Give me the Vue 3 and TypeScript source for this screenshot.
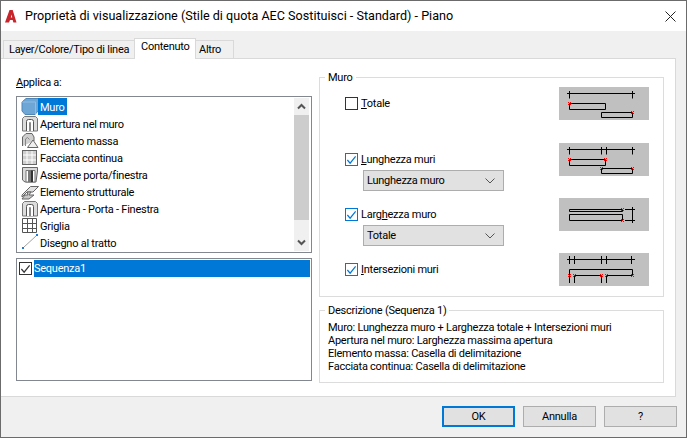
<script setup lang="ts">
interface Row { name: string; icon: string }
const rows: Row[] = [
  { name: 'Muro', icon: 'wall' },
  { name: 'Apertura nel muro', icon: 'opening' },
  { name: 'Elemento massa', icon: 'mass' },
  { name: 'Facciata continua', icon: 'curtain' },
  { name: 'Assieme porta/finestra', icon: 'assembly' },
  { name: 'Elemento strutturale', icon: 'beam' },
  { name: 'Apertura - Porta - Finestra', icon: 'opening' },
  { name: 'Griglia', icon: 'grid' },
  { name: 'Disegno al tratto', icon: 'line' }
]
const descrizione = [
  'Muro: Lunghezza muro + Larghezza totale + Intersezioni muri',
  'Apertura nel muro: Larghezza massima apertura',
  'Elemento massa: Casella di delimitazione',
  'Facciata continua: Casella di delimitazione'
]
function crosses(points: number[][]): string {
  return points
    .map(([x, y]) => {
      const l = x - 1.5
      const t = y - 1.5
      return `M${l} ${t}h1v1h-1ZM${l + 2} ${t}h1v1h-1ZM${l + 1} ${t + 1}h1v1h-1ZM${l} ${t + 2}h1v1h-1ZM${l + 2} ${t + 2}h1v1h-1Z`
    })
    .join('')
}
const topA = 'M8 6.5H76M10.5 4v7.500M73.5 4v7.500'
const topB = 'M8 6.5H76M10.5 4v7.500M42.5 4v7.500M47.5 4v7.500M73.5 4v7.500'
const boxes = 'M10.5 16.5H46.5V22.5H10.5ZM42.5 25.5H73.5V30.5H42.5Z'
const thirdLines = 'M10.5 11.5H63.5V13.5H10.5ZM10.5 16.5H63.5V22.5H10.5ZM73.5 9V25M66 11.5H76M66 22.5H76'
const fourthLines = 'M8 6.5H76M10.5 3v8M15.5 3v8M42.5 3v8M47.5 3v8M72.5 3v8M10.5 30V16.5H73.5V22.5H47.5M42.5 22.5H15.5M15.5 22.5V30M42.5 22.5V30M47.5 22.5V30'
const diagrams = {
  totale: { lines: topA + boxes, marks: crosses([[10.5, 16.5], [73.5, 25.5]]) },
  lunghezza: { lines: topB + boxes, marks: crosses([[10.5, 16.5], [46.5, 16.5], [42.5, 25.5], [73.5, 25.5]]) },
  larghezza: { lines: thirdLines, marks: crosses([[63.5, 11.5], [63.5, 22.5]]) },
  intersezioni: { lines: fourthLines, marks: crosses([[10.5, 22.5], [15.5, 22.5], [42.5, 22.5], [47.5, 22.5], [73.5, 22.5]]) }
}
</script>

<template>
  <div class="dialog">
    <header class="titlebar">
      <svg class="appicon" viewBox="0 0 12 14" width="12" height="14">
        <path d="M0 13.500 4.500 1h3.200l3.800 12.500H8.400L7.700 11H5L4 13.500ZM5.800 8.600h1.400L6.700 5.600Z" fill="#c8242b" />
      </svg>
      <span class="title">Proprietà di visualizzazione (Stile di quota AEC Sostituisci - Standard) - Piano</span>
      <svg class="close" viewBox="0 0 11 11" width="11" height="11">
        <path d="M.5.500l10 10M10.500.5l-10 10" stroke="#222" fill="none" />
      </svg>
    </header>

    <nav class="tabs">
      <div class="tab first">Layer/Colore/Tipo di linea</div>
      <div class="tab active">Contenuto</div>
      <div class="tab last">Altro</div>
    </nav>

    <main class="panel">
      <section class="left">
        <div class="applica"><u>A</u>pplica a:</div>
        <div class="listbox">
          <ul class="rows">
            <li v-for="(row, i) in rows" :key="row.name" class="row">
              <svg class="rowicon" viewBox="0 0 18 17" width="18" height="17">
                <g v-if="row.icon === 'wall'">
                  <path d="M1 4 5 .5h12.500v12l-3.500 4H4L1 13Z" fill="#6ea6d6" stroke="#4f86b8" />
                  <path d="M1 4h13.500v12.500" fill="none" stroke="#8fbde4" />
                </g>
                <g v-else-if="row.icon === 'opening'" fill="none" stroke="#555">
                  <path d="M3.500 1.500h11l2 2v12.500h-15V3.500Z" fill="#dcdcdc" stroke="#777" />
                  <path d="M5.500 16V6.500a2 2 0 0 1 2-2h3a2 2 0 0 1 2 2V16" fill="#fff" />
                  <path d="M8.500 16V7.500h1V16" stroke="#888" />
                </g>
                <g v-else-if="row.icon === 'mass'" fill="none" stroke="#555">
                  <path d="M1.500 14V5L5 1.500h6L13 5v4" fill="#cfcfcf" stroke="#666" />
                  <path d="M4.500 14V7l2-1.500 2 2" stroke="#888" />
                  <path d="M6.500 15.500 12 8l5 7.500Z" fill="#efefef" stroke="#666" />
                </g>
                <g v-else-if="row.icon === 'curtain'">
                  <rect x="1.500" y="1.500" width="14" height="14" fill="#cfcfcf" stroke="#666" />
                  <path d="M6 2v13M11 2v13M2 6h13M2 11h13" stroke="#fff" />
                </g>
                <g v-else-if="row.icon === 'assembly'">
                  <path d="M1.500 1.500h15V5l-1.500 11H4L1.500 14Z" fill="#d8d8d8" stroke="#666" />
                  <path d="M5 4.500h9V16H5Z" fill="#fff" stroke="#777" />
                  <rect x="7" y="4.500" width="5" height="11.500" fill="#777" />
                  <rect x="10" y="4.500" width="2" height="11.500" fill="#333" />
                </g>
                <g v-else-if="row.icon === 'beam'" fill="#e2e2e2" stroke="#666">
                  <path d="M1 12 9.500 3.500h8L12 9H6L1 14Z" />
                  <path d="M6 9h4l-2 3 5 0-5 4H1l3-4 3 0Z" fill="#c8c8c8" />
                </g>
                <g v-else-if="row.icon === 'grid'" fill="none" stroke="#555">
                  <path d="M1.500 1.500h14v14h-14ZM6.500 1.500v14M11.500 1.500v14M1.500 6.500h14M1.500 11.500h14" />
                </g>
                <g v-else>
                  <path d="M3 13 15 2" stroke="#888" stroke-width=".8" fill="none" />
                  <path d="M1 13h2v2H1ZM15 0h2v2h-2Z" fill="#1f78d1" />
                </g>
              </svg>
              <span class="rowtext" :class="{ selected: i === 0 }">{{ row.name }}</span>
            </li>
          </ul>
          <div class="scrollbar">
            <svg viewBox="0 0 15 17" width="15" height="17"><path d="M4 10.500 7.500 7 11 10.500" fill="none" stroke="#555" stroke-width="2" /></svg>
            <div class="thumb"></div>
            <div class="track"></div>
            <svg viewBox="0 0 15 17" width="15" height="17"><path d="M4 6.500 7.500 10 11 6.500" fill="none" stroke="#555" stroke-width="2" /></svg>
          </div>
        </div>
        <div class="seqbox">
          <div class="seqrow">
            <span class="seqcheck">
              <svg viewBox="0 0 12 12" width="12" height="12"><path d="M1.500 6 4.500 9.500 10.500 2" fill="none" stroke="#333" stroke-width="1.300" /></svg>
            </span>
            <span class="seqname">Sequenza1</span>
          </div>
        </div>
      </section>

      <section class="right">
        <div class="group muro">
          <span class="legend">Muro</span>
          <div class="option opt-totale">
            <div class="control">
              <div class="checkline">
                <span class="box"></span>
                <span><u>T</u>otale</span>
              </div>
            </div>
            <svg class="diagram" viewBox="0 0 90 33" width="90" height="33">
              <path :d="diagrams.totale.lines" fill="none" stroke="#000" />
              <path :d="diagrams.totale.marks" fill="#f00" />
            </svg>
          </div>
          <div class="option opt-lunghezza">
            <div class="control">
              <div class="checkline">
                <span class="box on">
                  <svg viewBox="0 0 12 12" width="12" height="12"><path d="M1.500 6 4.500 9.500 10.500 2" fill="none" stroke="#0078d7" stroke-width="1.300" /></svg>
                </span>
                <span><u>L</u>unghezza muri</span>
              </div>
              <div class="select">
                <span>Lunghezza muro</span>
                <svg viewBox="0 0 10 6" width="10" height="6"><path d="M.5.500 5 5 9.500.5" fill="none" stroke="#555" /></svg>
              </div>
            </div>
            <svg class="diagram" viewBox="0 0 90 33" width="90" height="33">
              <path :d="diagrams.lunghezza.lines" fill="none" stroke="#000" />
              <path :d="diagrams.lunghezza.marks" fill="#f00" />
            </svg>
          </div>
          <div class="option opt-larghezza">
            <div class="control">
              <div class="checkline">
                <span class="box on">
                  <svg viewBox="0 0 12 12" width="12" height="12"><path d="M1.500 6 4.500 9.500 10.500 2" fill="none" stroke="#0078d7" stroke-width="1.300" /></svg>
                </span>
                <span>Larg<u>h</u>ezza muro</span>
              </div>
              <div class="select">
                <span>Totale</span>
                <svg viewBox="0 0 10 6" width="10" height="6"><path d="M.5.500 5 5 9.500.5" fill="none" stroke="#555" /></svg>
              </div>
            </div>
            <svg class="diagram" viewBox="0 0 90 33" width="90" height="33">
              <path :d="diagrams.larghezza.lines" fill="none" stroke="#000" />
              <path :d="diagrams.larghezza.marks" fill="#f00" />
            </svg>
          </div>
          <div class="option opt-intersezioni">
            <div class="control">
              <div class="checkline">
                <span class="box on">
                  <svg viewBox="0 0 12 12" width="12" height="12"><path d="M1.500 6 4.500 9.500 10.500 2" fill="none" stroke="#0078d7" stroke-width="1.300" /></svg>
                </span>
                <span><u>I</u>ntersezioni muri</span>
              </div>
            </div>
            <svg class="diagram" viewBox="0 0 90 33" width="90" height="33">
              <path :d="diagrams.intersezioni.lines" fill="none" stroke="#000" />
              <path :d="diagrams.intersezioni.marks" fill="#f00" />
            </svg>
          </div>
        </div>

        <div class="group desc">
          <span class="legend">Descrizione (Sequenza 1)</span>
          <p v-for="line in descrizione" :key="line">{{ line }}</p>
        </div>
      </section>
    </main>

    <footer class="footer">
      <button class="btn default">OK</button>
      <button class="btn">Annulla</button>
      <button class="btn">?</button>
    </footer>
  </div>
</template>

<style scoped>
.dialog {
  width: 687px;
  height: 438px;
  box-sizing: border-box;
  border: 1px solid #6b6b6b;
  background: #f0f0f0;
  display: flex;
  flex-direction: column;
  font: 11px/16px Roboto, "Liberation Sans", sans-serif;
  letter-spacing: -0.25px;
  color: #000;
  overflow: hidden;
}
.titlebar {
  height: 30px;
  flex: none;
  background: #fff;
  display: flex;
  align-items: center;
  padding: 0 10px 0 4px;
}
.appicon { margin: 0 8px 0 0; }
.title { flex: 1; font-size: 12.6px; letter-spacing: 0; white-space: nowrap; }
.tabs {
  height: 27px;
  flex: none;
  display: flex;
  align-items: flex-end;
  padding-left: 2px;
  position: relative;
  z-index: 1;
}
.tab {
  height: 19px;
  box-sizing: border-box;
  border: 1px solid #d9d9d9;
  border-bottom: none;
  border-left: none;
  padding: 1px 0 0 3px;
  margin-bottom: -1px;
  white-space: nowrap;
}
.tab.first { width: 132px; border-left: 1px solid #d9d9d9; padding-left: 5px; }
.tab.active {
  width: 62px;
  height: 21px;
  background: #fff;
  border-left: 1px solid #d9d9d9;
  margin-left: -1px;
  padding: 0 0 0 6px;
}
.tab.last { width: 38px; }
.panel {
  flex: none;
  height: 339px;
  box-sizing: border-box;
  margin: 0 10px 0 0;
  background: #fff;
  border: 1px solid #d9d9d9;
  border-left: none;
  display: flex;
  padding: 15px 10px 0 15px;
}
.left { width: 296px; flex: none; }
.applica { height: 16px; margin-top: 1px; margin-bottom: 5px; }
.listbox {
  height: 157px;
  box-sizing: border-box;
  border: 1px solid #828790;
  display: flex;
  padding: 1px 2px 1px 1px;
}
.rows {
  list-style: none;
  margin: 0;
  padding: 0;
  flex: 1;
}
.row {
  height: 17px;
  display: flex;
  align-items: center;
  padding-left: 3px;
}
.rowicon { flex: none; margin-right: -1px; }
.rowtext {
  height: 17px;
  box-sizing: border-box;
  padding: 1px 2px 0;
  line-height: 17px;
}
.rowtext.selected { background: #0078d7; color: #fff; }
.scrollbar {
  width: 15px;
  flex: none;
  display: flex;
  flex-direction: column;
  background: #f0f0f0;
}
.scrollbar svg { flex: none; }
.thumb { height: 105px; background: #cdcdcd; flex: none; }
.track { flex: 1; }
.seqbox {
  height: 123px;
  box-sizing: border-box;
  margin-top: 5px;
  border: 1px solid #828790;
  padding: 1px 1px 0 2px;
}
.seqrow { display: flex; align-items: center; height: 17px; }
.seqcheck {
  width: 13px;
  height: 13px;
  box-sizing: border-box;
  border: 1px solid #333;
  margin-right: 2px;
  flex: none;
  display: flex;
  align-items: center;
  justify-content: center;
}
.seqname {
  flex: 1;
  background: #0078d7;
  color: #fff;
  line-height: 17px;
}
.right {
  width: 345px;
  flex: none;
  margin-left: 7px;
  display: flex;
  flex-direction: column;
}
.group {
  position: relative;
  box-sizing: border-box;
  border: 1px solid #dcdcdc;
}
.legend {
  position: absolute;
  left: 5px;
  top: -8px;
  background: #fff;
  padding: 0 3px;
  line-height: 16px;
}
.muro {
  height: 220px;
  margin-top: 3px;
  padding: 0 14px 0 25px;
}
.option {
  display: flex;
  justify-content: space-between;
  align-items: flex-start;
}
.opt-totale { margin-top: 9px; height: 56px; }
.opt-lunghezza { height: 55px; }
.opt-larghezza { height: 55px; }
.control { padding-top: 10px; }
.checkline {
  display: flex;
  align-items: center;
  height: 13px;
  white-space: nowrap;
}
.box {
  width: 13px;
  height: 13px;
  box-sizing: border-box;
  border: 1px solid #333;
  background: #fff;
  margin-right: 3px;
  display: flex;
  align-items: center;
  justify-content: center;
  flex: none;
}
.box.on { border-color: #0078d7; }
.select {
  width: 141px;
  height: 21px;
  box-sizing: border-box;
  margin: 4px 0 0 18px;
  background: #e1e1e1;
  border: 1px solid #adadad;
  display: flex;
  align-items: center;
  justify-content: space-between;
  padding: 1px 8px 0 3px;
}
.diagram { background: #c0c0c0; flex: none; }
.desc {
  height: 73px;
  margin-top: 13px;
  padding: 10px 8px 0 8px;
}
.desc p { margin: 0; line-height: 13px; white-space: nowrap; }
.footer {
  flex: 1;
  display: flex;
  justify-content: flex-end;
  gap: 8px;
  padding: 9px 9px 0 0;
}
.btn {
  width: 73px;
  height: 21px;
  box-sizing: border-box;
  background: #e1e1e1;
  border: 1px solid #adadad;
  font: inherit;
  letter-spacing: inherit;
  color: #000;
  padding: 0;
}
.btn.default { border: 2px solid #0078d7; }
</style>
